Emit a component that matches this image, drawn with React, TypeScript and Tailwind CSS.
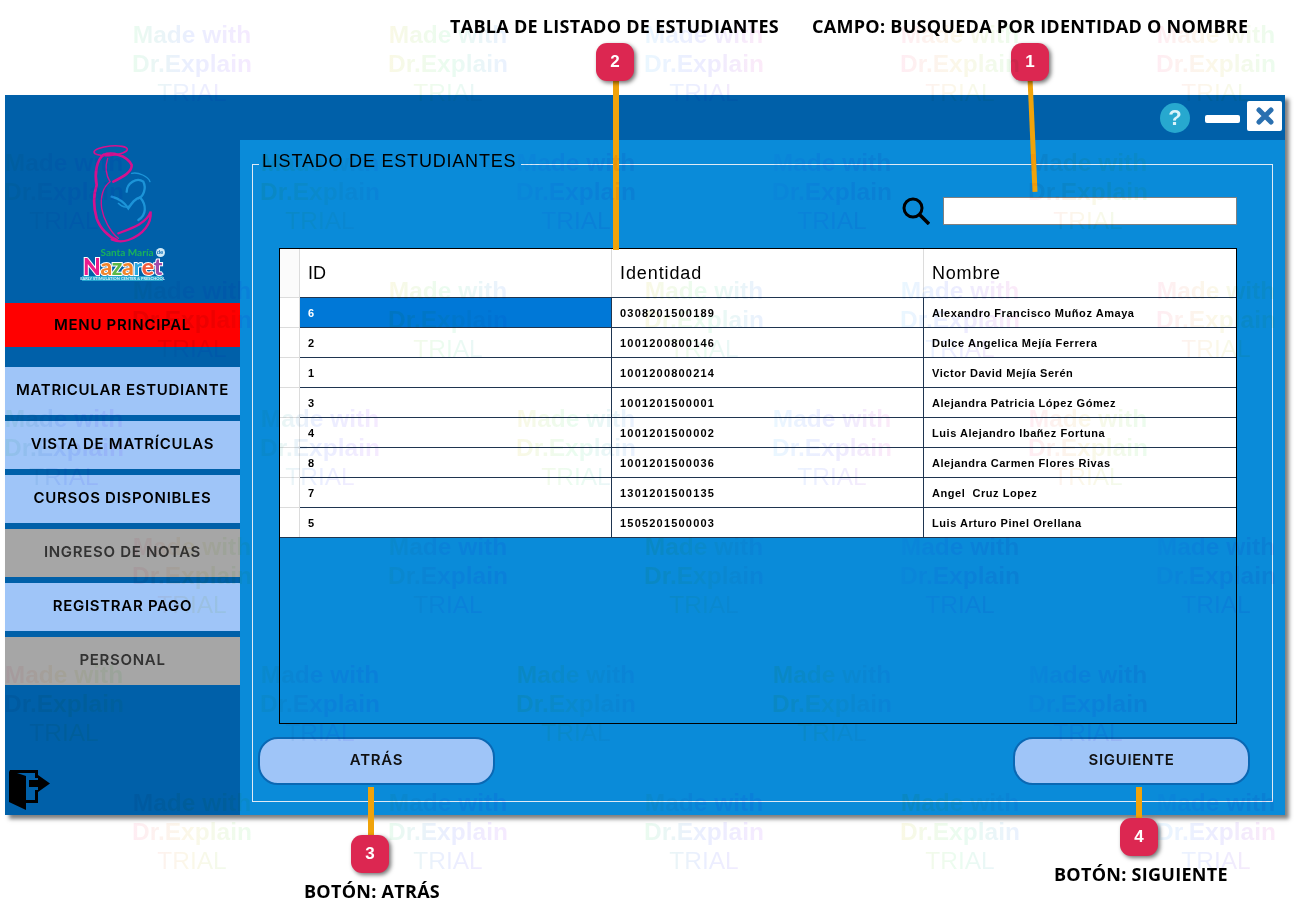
const students = [
  { id: "6", identidad: "0308201500189", nombre: "Alexandro Francisco Muñoz Amaya", selected: true },
  { id: "2", identidad: "1001200800146", nombre: "Dulce Angelica Mejía Ferrera" },
  { id: "1", identidad: "1001200800214", nombre: "Victor David Mejía Serén" },
  { id: "3", identidad: "1001201500001", nombre: "Alejandra Patricia López Gómez" },
  { id: "4", identidad: "1001201500002", nombre: "Luis Alejandro Ibañez Fortuna" },
  { id: "8", identidad: "1001201500036", nombre: "Alejandra Carmen Flores Rivas" },
  { id: "7", identidad: "1301201500135", nombre: "Angel  Cruz Lopez" },
  { id: "5", identidad: "1505201500003", nombre: "Luis Arturo Pinel Orellana" },
];

const menu = [
  { label: "MATRICULAR ESTUDIANTE", off: false },
  { label: "VISTA DE MATRÍCULAS", off: false },
  { label: "CURSOS DISPONIBLES", off: false },
  { label: "INGRESO DE NOTAS", off: true },
  { label: "REGISTRAR PAGO", off: false },
  { label: "PERSONAL", off: true },
];

const callouts = [
  { n: "2", x: 596, y: 43 },
  { n: "1", x: 1011, y: 43 },
  { n: "3", x: 351, y: 835 },
  { n: "4", x: 1120, y: 818 },
];

const captions = [
  { text: "TABLA DE LISTADO DE ESTUDIANTES", x: 450, y: 15 },
  { text: "CAMPO: BUSQUEDA POR IDENTIDAD O NOMBRE", x: 812, y: 15 },
  { text: "BOTÓN: ATRÁS", x: 304, y: 880 },
  { text: "BOTÓN: SIGUIENTE", x: 1054, y: 863 },
];

const marks: { x: number; y: number }[] = [];
[20, 148, 276, 404, 532, 660, 788].forEach((y, row) => {
  for (let i = 0; i < 5; i++) {
    marks.push({ x: (row % 2 === 0 ? 128 : 0) + i * 256, y });
  }
});

const tints = [
  "from-[#eafcee] via-[#eaeeff] to-[#f6eaff]",
  "from-[#ffecf4] via-[#fbf8e8] to-[#eafcee]",
  "from-[#eaf8ff] via-[#ececff] to-[#fdeaf8]",
  "from-[#fbf8e4] via-[#eafcf0] to-[#eaf0ff]",
];

function Logo() {
  return (
    <div className="flex flex-col items-center">
      <svg viewBox="0 0 225 330" className="h-[110px] w-[75px]" fill="none" strokeLinecap="round">
        <g stroke="#d4118f">
          <ellipse cx="77" cy="32" rx="50" ry="14" strokeWidth="5" transform="rotate(-5 77 32)" />
          <path d="M55 45 C35 60 28 100 35 135 C25 165 25 200 35 235 C45 265 70 290 95 300" strokeWidth="8" />
          <path d="M55 45 C80 35 125 45 140 75 C142 95 115 110 85 125" strokeWidth="8" />
          <path d="M68 55 C60 80 60 100 75 125 C55 140 45 170 50 205 C55 235 75 275 100 295" strokeWidth="4" />
          <path d="M100 280 C140 265 185 250 197 215 C200 250 175 285 130 300 C110 307 95 305 80 298" strokeWidth="7" />
        </g>
        <g stroke="#1c94d8">
          <path d="M125 155 C125 130 155 110 175 125 C185 145 175 170 160 175" strokeWidth="7" />
          <path d="M140 100 C160 95 190 110 195 125" strokeWidth="4" />
          <path d="M80 170 C100 175 120 190 130 205 C140 190 150 175 165 172 C185 195 185 225 160 240" strokeWidth="7" />
          <path d="M100 190 C115 205 130 205 140 190" strokeWidth="4" />
        </g>
      </svg>
      <div className="-mt-[2px] ml-[20px] flex h-[8px] items-center gap-[2px] font-['Lato',sans-serif] text-[10px] font-bold leading-none text-[#19b35a]">
        <span>Santa María</span>
        <span className="flex h-[9px] w-[9px] items-center justify-center rounded-full bg-[#cfe9f7] text-[6px] text-[#1170b8]">de</span>
      </div>
      <div className="flex h-[20px] items-center font-['Lato',sans-serif] text-[23px] font-black leading-none tracking-[-0.4px] [-webkit-text-stroke:2px_white] [paint-order:stroke_fill]">
        <span className="text-[#ec1c8c]">N</span>
        <span className="text-[#f2842c]">a</span>
        <span className="text-[#5cb848]">z</span>
        <span className="text-[#f2842c]">a</span>
        <span className="text-[#2aa7df]">r</span>
        <span className="text-[#f15a3c]">e</span>
        <span className="text-[#a04aa8]">t</span>
      </div>
      <div className="flex h-[5px] w-[81px] items-center justify-center bg-[#22a5cf] font-['Lato',sans-serif] text-[4px] font-bold leading-none whitespace-nowrap text-[#d8f2fa]">
        EARLY STIMULATION CENTER &amp; PRESCHOOL
      </div>
    </div>
  );
}

function Sidebar() {
  return (
    <aside className="relative flex w-[235px] flex-col font-['Inter',sans-serif]">
      <div className="h-[163px]">
        <Logo />
      </div>
      <div className="flex h-[44px] items-center justify-center bg-[#ff0000] text-[15px] font-semibold tracking-[0.7px] text-black">
        MENU PRINCIPAL
      </div>
      <nav className="mt-[20px] flex flex-col gap-[6px]">
        {menu.map((item) => (
          <div
            key={item.label}
            className={
              item.off
                ? "flex h-[48px] items-center justify-center bg-[#a6a6a6] pb-[2px] text-[15px] font-semibold tracking-[0.7px] text-[#333333]"
                : "flex h-[48px] items-center justify-center bg-[#9fc5f8] pb-[2px] text-[15px] font-semibold tracking-[0.7px] text-black"
            }
          >
            {item.label}
          </div>
        ))}
      </nav>
      <svg viewBox="0 0 41 40" className="mt-[85px] ml-[4px] h-[40px] w-[41px]" fill="#000000">
        <path d="M1 0 H29 V8 H26 V3 H8 L17 6 V30 H26 V20 H29 V33 H17 V40 L0 32 V2 Z" />
        <path d="M20 10 H29 V5 L41 13.5 L29 22 V17 H20 Z" />
      </svg>
    </aside>
  );
}

function TitleBar() {
  return (
    <div className="flex h-[45px] items-center justify-end pr-[3px]">
      <div className="flex h-[30px] w-[30px] items-center justify-center rounded-full bg-[#27a8cf] text-[22px] font-bold text-[#d9f3fa]">
        ?
      </div>
      <div className="mt-[2px] ml-[15px] h-[8px] w-[35px] rounded-[2px] bg-white" />
      <div className="mb-[4px] ml-[7px] flex h-[30px] w-[35px] items-center justify-center rounded-[2px] bg-white">
        <svg viewBox="0 0 18 18" className="h-[18px] w-[18px]" stroke="#2a70b0" strokeWidth="5" strokeLinecap="round">
          <path d="M3 3 L15 15 M15 3 L3 15" />
        </svg>
      </div>
    </div>
  );
}

function StudentsTable() {
  return (
    <div className="mt-[23px] mr-[35px] ml-[26px] h-[476px] border border-black">
      <div className="grid h-[48px] grid-cols-[20px_312px_312px_1fr] bg-white text-[18px] text-black">
        <div className="border-r border-[#dcdcdc] bg-[#fbfbfb]" />
        <div className="flex items-center border-r border-[#dcdcdc] pl-[8px]">ID</div>
        <div className="flex items-center border-r border-[#dcdcdc] pl-[8px] tracking-[0.9px]">Identidad</div>
        <div className="flex items-center pl-[8px] tracking-[0.8px]">Nombre</div>
      </div>
      {students.map((s) => (
        <div
          key={s.id}
          className="grid h-[30px] grid-cols-[20px_312px_312px_1fr] bg-white text-[11px] font-bold tracking-[0.55px] text-black last:h-[31px] last:border-b last:border-[#1f3550]"
        >
          <div className="border-t border-r border-[#dcdcdc] bg-white" />
          <div
            className={
              s.selected
                ? "flex items-center border-t border-r border-[#1f3550] bg-[#0078d7] pt-[1px] pl-[8px] text-white"
                : "flex items-center border-t border-r border-[#1f3550] pt-[1px] pl-[8px]"
            }
          >
            {s.id}
          </div>
          <div className="flex items-center border-t border-r border-[#1f3550] pt-[1px] pl-[8px] tracking-[1.2px]">{s.identidad}</div>
          <div className="flex items-center border-t border-[#1f3550] pt-[1px] pl-[8px] whitespace-pre">{s.nombre}</div>
        </div>
      ))}
    </div>
  );
}

function PillButton({ label }: { label: string }) {
  return (
    <button className="h-[48px] w-[237px] rounded-[20px] border-2 border-[#0a68b4] bg-[#9fc5f8] pb-[2px] font-['Inter',sans-serif] text-[15px] font-semibold tracking-[0.7px] text-[#111111]">
      {label}
    </button>
  );
}

export default function App() {
  return (
    <div className="relative h-[919px] w-[1294px] overflow-hidden bg-white pt-[95px] pl-[5px] font-['Liberation_Sans',Arial,sans-serif]">
      <div className="h-[720px] w-[1280px] bg-[#0060a9] shadow-[4px_4px_4px_rgba(0,0,0,0.5)]">
        <TitleBar />
        <div className="flex h-[675px]">
          <Sidebar />
          <main className="flex-1 bg-[#0a8bd9] px-[12px] pt-[14px]">
            <fieldset className="h-[648px] border border-[#dfeaf5] p-0">
              <legend className="ml-[6px] h-[20px] w-[262px] px-[3px] text-[18px] leading-[14px] tracking-[0.8px] whitespace-nowrap text-black">
                LISTADO DE ESTUDIANTES
              </legend>
              <div className="mt-[23px] mr-[35px] flex h-[28px] items-center justify-end">
                <svg viewBox="0 0 28 28" className="mr-[13px] h-[28px] w-[28px]" fill="none" stroke="#000000" strokeWidth="3">
                  <circle cx="11" cy="11" r="9" />
                  <path d="M17.5 17.5 L27 27" strokeWidth="3.5" />
                </svg>
                <input className="h-[28px] w-[294px] border border-[#808080] bg-white" />
              </div>
              <StudentsTable />
              <div className="mt-[13px] mr-[22px] ml-[5px] flex justify-between">
                <PillButton label="ATRÁS" />
                <PillButton label="SIGUIENTE" />
              </div>
            </fieldset>
          </main>
        </div>
      </div>

      {/* callout lines */}
      <div className="absolute top-[78px] left-[613px] h-[172px] w-[6px] bg-[#f0a30a]" />
      <div className="absolute top-[78px] left-[1030px] h-[114px] w-[5px] -rotate-[2.5deg] bg-[#f0a30a]" />
      <div className="absolute top-[787px] left-[368px] h-[50px] w-[6px] bg-[#f0a30a]" />
      <div className="absolute top-[787px] left-[1136px] h-[33px] w-[6px] bg-[#f0a30a]" />

      {callouts.map((c) => (
        <div
          key={c.n}
          style={{ left: c.x, top: c.y }}
          className="absolute flex h-[38px] w-[38px] items-center justify-center rounded-[11px] bg-[#dc2751] text-[17px] font-bold text-white shadow-[2px_2px_4px_rgba(0,0,0,0.55)]"
        >
          {c.n}
        </div>
      ))}

      {captions.map((c) => (
        <div
          key={c.text}
          style={{ left: c.x, top: c.y }}
          className="absolute font-['Open_Sans',sans-serif] text-[18px] leading-[22px] font-bold tracking-[0.28px] whitespace-nowrap text-black"
        >
          {c.text}
        </div>
      ))}

      {/* trial watermark */}
      {marks.map((m, i) => (
        <div
          key={i}
          style={{ left: m.x, top: m.y }}
          className={`pointer-events-none absolute flex w-[128px] flex-col items-center bg-gradient-to-r bg-clip-text text-[24.5px] leading-[29px] font-bold whitespace-nowrap text-transparent mix-blend-multiply ${tints[(i * 3 + (i >> 2)) % 4]}`}
        >
          <span>Made with</span>
          <span>Dr.Explain</span>
          <span className="font-normal">TRIAL</span>
        </div>
      ))}
    </div>
  );
}
